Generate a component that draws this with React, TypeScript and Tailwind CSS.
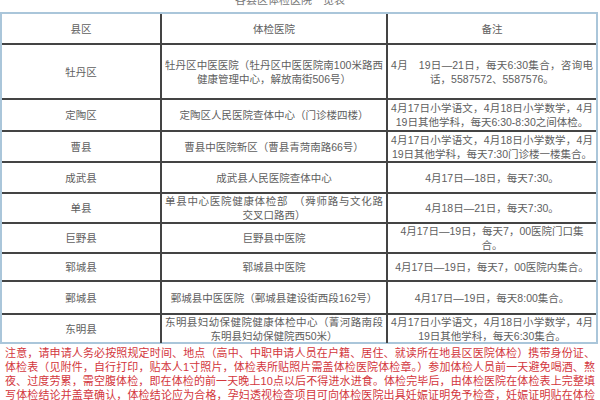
import React from "react";

type Row = {
  h: number;
  county: string;
  hosp: string[];
  note: string[];
};

const rows: Row[] = [
  {
    h: 55,
    county: "牡丹区",
    hosp: ["牡丹区中医医院（牡丹区中医医院南100米路西", "健康管理中心，解放南街506号）"],
    note: ["4月　19日—21日，每天6:30集合，咨询电", "话，5587572、5587576。"],
  },
  {
    h: 32,
    county: "定陶区",
    hosp: ["定陶区人民医院查体中心（门诊楼四楼）"],
    note: ["4月17日小学语文，4月18日小学数学，4月", "19日其他学科，每天6:30-8:30之间体检。"],
  },
  {
    h: 31,
    county: "曹县",
    hosp: ["曹县中医院新区（曹县青菏南路66号）"],
    note: ["4月17日小学语文，4月18日小学数学，4月", "19日其他学科，每天7:30门诊楼一楼集合。"],
  },
  {
    h: 31,
    county: "成武县",
    hosp: ["成武县人民医院查体中心"],
    note: ["4月17日—18日，每天7:30。"],
  },
  {
    h: 30,
    county: "单县",
    hosp: ["单县中心医院健康体检部　（舜师路与文化路", "交叉口路西）"],
    note: ["4月18日—21日，每天7:30。"],
  },
  {
    h: 30,
    county: "巨野县",
    hosp: ["巨野县中医院"],
    note: ["4月17日—19日，每天7，00医院门口集合。"],
  },
  {
    h: 28,
    county: "郓城县",
    hosp: ["郓城县中医院"],
    note: ["4月17日—19日，每天7，00医院内集合。"],
  },
  {
    h: 33,
    county: "鄄城县",
    hosp: ["鄄城县中医医院（鄄城县建设街西段162号）"],
    note: ["4月17日—19日，每天8:00集合。"],
  },
  {
    h: 29,
    county: "东明县",
    hosp: ["东明县妇幼保健院健康体检中心（菁河路南段", "东明县妇幼保健院西50米）"],
    note: ["4月17日小学语文，4月18日小学数学，4月", "19日其他学科，每天6:30集合。"],
  },
];

function Lines({ lines }: { lines: string[] }) {
  if (lines.length === 1) {
    return <div className="text-center">{lines[0]}</div>;
  }
  return (
    <div className="w-full">
      <div className="text-justify [text-align-last:justify]">{lines[0]}</div>
      <div className="text-center">{lines[1]}</div>
    </div>
  );
}

export default function App() {
  return (
    <div
      className="w-[600px] h-[400px] overflow-hidden bg-white text-[#5e5e5e]"
      style={{ fontFamily: '"Liberation Sans", "Noto Sans CJK SC", sans-serif' }}
    >
      <div className="h-[12px] overflow-hidden flex justify-center pr-[20px]">
        <div className="text-[11px] leading-[12px] mt-[-6px] text-[#777]">各县区体检医院一览表</div>
      </div>
      <div className="w-[598px] border-2 border-[#aac6da] text-[10.5px] leading-[14px]">
        <div className="grid grid-cols-[158px_226px_1fr] h-[29px]">
          <div className="flex items-center justify-center">县区</div>
          <div className="flex items-center justify-center border-l-2 border-[#444]">体检医院</div>
          <div className="flex items-center justify-center border-l-2 border-[#444]">备注</div>
        </div>
        {rows.map((r) => (
          <div
            key={r.county}
            className="grid grid-cols-[158px_226px_1fr] border-t-2 border-[#444]"
            style={{ height: r.h }}
          >
            <div className="flex items-center justify-center">{r.county}</div>
            <div className="flex items-center justify-center border-l-2 border-[#444] px-[3px]">
              <Lines lines={r.hosp} />
            </div>
            <div className="flex items-center justify-center border-l-2 border-[#444] px-[3px]">
              <Lines lines={r.note} />
            </div>
          </div>
        ))}
      </div>
      <div className="px-[5px] pt-[2px] text-[11px] leading-[14px] text-[#d3363c]">
        <div className="text-justify [text-align-last:justify]">注意，请申请人务必按照规定时间、地点（高中、中职申请人员在户籍、居住、就读所在地县区医院体检）携带身份证、</div>
        <div className="text-justify [text-align-last:justify]">体检表（见附件，自行打印，贴本人1寸照片，体检表所贴照片需盖体检医院体检章。）参加体检人员前一天避免喝酒、熬</div>
        <div className="text-justify [text-align-last:justify]">夜、过度劳累，需空腹体检，即在体检的前一天晚上10点以后不得进水进食。体检完毕后，由体检医院在体检表上完整填</div>
        <div className="text-justify [text-align-last:justify]">写体检结论并盖章确认，体检结论应为合格，孕妇透视检查项目可向体检医院出具妊娠证明免予检查，妊娠证明贴在体检</div>
      </div>
    </div>
  );
}
